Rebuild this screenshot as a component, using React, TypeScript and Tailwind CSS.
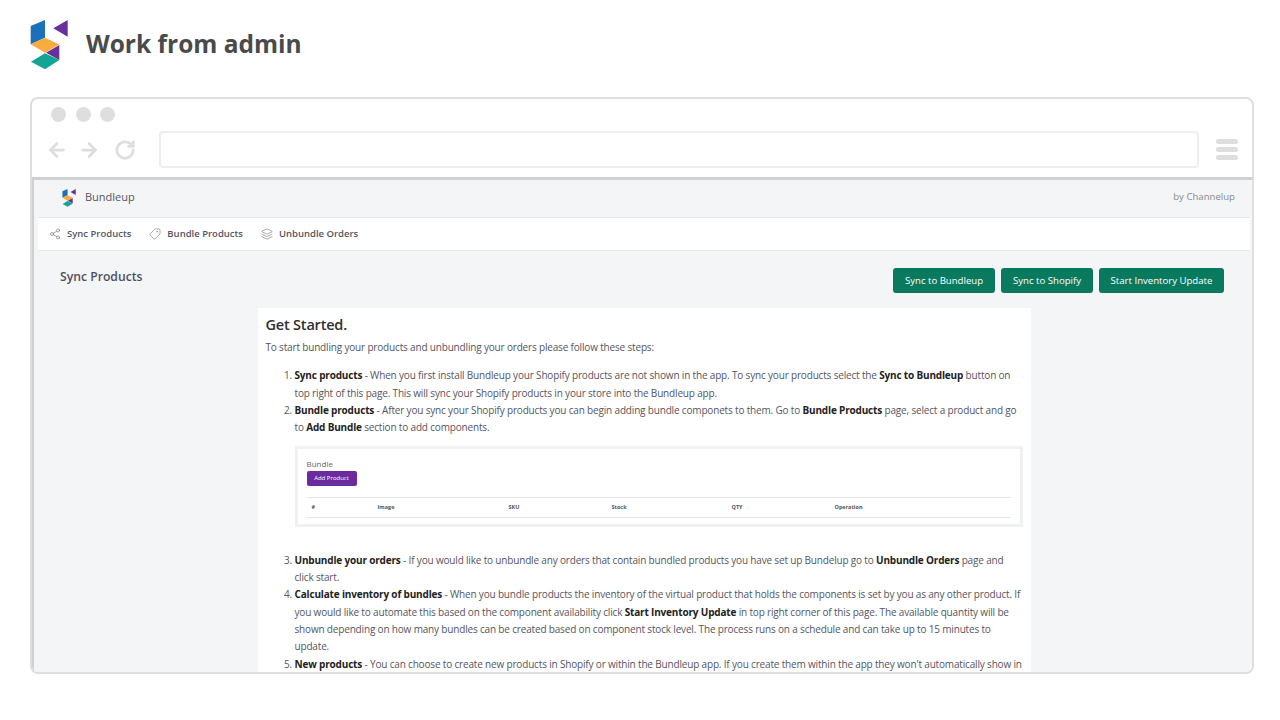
import React from "react";
import { ArrowLeft, ArrowRight, RotateCw, Share2, Tag, Layers } from "lucide-react";

function Logo({ className }: { className: string }) {
  return (
    <svg viewBox="0 0 38 50" className={className}>
      <polygon points="0.7,6 15,0 15,17.7 0.7,24.3" fill="#1b6fbb" />
      <polygon points="0.7,24.3 15,17.7 29.3,24.5 15,32.7" fill="#f9ab3c" />
      <polygon points="37.7,0 23.3,8.3 37.7,16.7" fill="#67309b" />
      <polygon points="29.3,25 29.3,40 16,32.7" fill="#67309b" />
      <polygon points="1,41.7 15,33.3 29.3,40 15,49.3" fill="#12a594" />
    </svg>
  );
}

const navItems = [
  { label: "Sync Products", icon: Share2, iconClass: "w-[12px] h-[12px] text-[#777777]" },
  { label: "Bundle Products", icon: Tag, iconClass: "w-[12px] h-[12px] text-[#777777] -scale-x-100" },
  { label: "Unbundle Orders", icon: Layers, iconClass: "w-[12px] h-[12px] text-[#777777]" },
];

const columns = [
  { label: "#", width: "w-[66px]" },
  { label: "Image", width: "w-[131px]" },
  { label: "SKU", width: "w-[103px]" },
  { label: "Stock", width: "w-[120px]" },
  { label: "QTY", width: "w-[103px]" },
  { label: "Operation", width: "w-[100px]" },
];

export default function App() {
  return (
    <div className="w-[1280px] h-[720px] overflow-hidden bg-white font-['Open_Sans','Noto_Sans',sans-serif]">
      {/* Title */}
      <div className="h-[97px] pl-[30px] pt-5 flex items-start">
        <Logo className="w-[38px] h-[50px]" />
        <h1 className="ml-[18px] mt-[5px] text-[24.5px] leading-[38px] font-bold text-[#4a4a4a]">Work from admin</h1>
      </div>

      {/* Browser frame */}
      <div className="ml-[30px] w-[1224px] h-[577px] border-2 border-[#dedede] rounded-lg flex flex-col overflow-hidden">
        <div className="h-[78px] shrink-0 pl-[19px] pt-2">
          <div className="flex gap-[9.5px]">
            <div className="w-[15px] h-[15px] rounded-full bg-[#dedede]" />
            <div className="w-[15px] h-[15px] rounded-full bg-[#dedede]" />
            <div className="w-[15px] h-[15px] rounded-full bg-[#dedede]" />
          </div>
          <div className="mt-[9px] flex items-center">
            <ArrowLeft className="w-[22px] h-[22px] -ml-[5px] text-[#dedede]" strokeWidth={3} />
            <ArrowRight className="w-[22px] h-[22px] ml-[10px] text-[#dedede]" strokeWidth={3} />
            <RotateCw className="w-[22px] h-[22px] ml-[14px] text-[#dedede]" strokeWidth={3} />
            <div className="ml-[23px] w-[1040px] h-[37px] border-2 border-[#eeeeee] rounded" />
            <div className="ml-[17px] flex flex-col gap-[3px]">
              <div className="w-[22px] h-[5px] rounded-sm bg-[#dedede]" />
              <div className="w-[22px] h-[5px] rounded-sm bg-[#dedede]" />
              <div className="w-[22px] h-[5px] rounded-sm bg-[#dedede]" />
            </div>
          </div>
        </div>

        {/* App inside the browser */}
        <div className="flex-1 min-h-0 border-t-[3px] border-l-[2px] border-[#d0d0d0] bg-[#f4f5f7] pl-[4px] pr-[2px] overflow-hidden">
          <div className="h-[38px] pb-[2px] flex items-center justify-between pl-[24px] pr-[15px] border-b border-[#e6e6e6]">
            <div className="flex items-center gap-[9px]">
              <Logo className="w-[14px] h-[18px]" />
              <span className="text-[11px] text-[#55555f]">Bundleup</span>
            </div>
            <span className="text-[9.6px] text-[#8a8a8a]">by Channelup</span>
          </div>

          <div className="h-[33px] bg-white border-b border-[#e6e6e6] flex items-center pl-[11px] gap-[18px]">
            {navItems.map((item) => {
              const Icon = item.icon;
              return (
                <div key={item.label} className="flex items-center gap-[6px]">
                  <Icon className={item.iconClass} strokeWidth={1.25} />
                  <span className="text-[9.5px] font-semibold text-[#55555f]">{item.label}</span>
                </div>
              );
            })}
          </div>

          <div className="flex items-start justify-between pl-[22px] pr-[26px] pt-[17px]">
            <h2 className="text-[12.2px] leading-[17px] font-semibold text-[#4f4f60]">Sync Products</h2>
            <div className="flex gap-[6px]">
              <button className="h-[25px] w-[102px] pt-px rounded-[3px] bg-[#0a7a5f] text-[9.6px] text-white">Sync to Bundleup</button>
              <button className="h-[25px] w-[92px] pt-px rounded-[3px] bg-[#0a7a5f] text-[9.6px] text-white">Sync to Shopify</button>
              <button className="h-[25px] w-[125px] pt-px rounded-[3px] bg-[#0a7a5f] text-[9.6px] text-white">Start Inventory Update</button>
            </div>
          </div>

          <div className="mx-auto mt-[15px] w-[773px] bg-white px-2 pt-2 text-[10px] tracking-[-0.17px] leading-[17.35px] text-[#55555f]">
            <h3 className="-mt-px text-[14.5px] tracking-[-0.2px] leading-[20px] font-semibold text-[#2f2f2f]">Get Started.</h3>
            <p className="mt-[4px]">To start bundling your products and unbundling your orders please follow these steps:</p>
            <ol className="mt-[11px] list-decimal pl-[29px]">
              <li>
                <b className="text-[#222222]">Sync products</b> - When you first install Bundleup your Shopify products are not shown in the app. To sync your products select the <b className="text-[#222222]">Sync to Bundleup</b> button on<br />
                top right of this page. This will sync your Shopify products in your store into the Bundleup app.
              </li>
              <li>
                <b className="text-[#222222]">Bundle products</b> - After you sync your Shopify products you can begin adding bundle componets to them. Go to <b className="text-[#222222]">Bundle Products</b> page, select a product and go<br />
                to <b className="text-[#222222]">Add Bundle</b> section to add components.
                <div className="mt-[9px] mb-[25px] h-[81px] w-[728px] border-[3px] border-[#f0f1f3] bg-white px-[9px] pt-[9px] tracking-normal">
                  <div className="text-[8px] leading-[12px] text-[#666666]">Bundle</div>
                  <div className="mt-px w-[50px] h-[15px] rounded-[2px] bg-[#6b2a9e] text-[6px] leading-[15px] text-center text-white">Add Product</div>
                  <div className="mt-[11px] h-[21px] border-y border-[#e4e5ea] flex items-center pl-[5px] text-[5.5px] font-bold text-[#555555]">
                    {columns.map((col) => (
                      <div key={col.label} className={col.width}>{col.label}</div>
                    ))}
                  </div>
                </div>
              </li>
              <li>
                <b className="text-[#222222]">Unbundle your orders</b> - If you would like to unbundle any orders that contain bundled products you have set up Bundelup go to <b className="text-[#222222]">Unbundle Orders</b> page and<br />
                click start.
              </li>
              <li>
                <b className="text-[#222222]">Calculate inventory of bundles</b> - When you bundle products the inventory of the virtual product that holds the components is set by you as any other product. If<br />
                you would like to automate this based on the component availability click <b className="text-[#222222]">Start Inventory Update</b> in top right corner of this page. The available quantity will be<br />
                shown depending on how many bundles can be created based on component stock level. The process runs on a schedule and can take up to 15 minutes to<br />
                update.
              </li>
              <li>
                <b className="text-[#222222]">New products</b> - You can choose to create new products in Shopify or within the Bundleup app. If you create them within the app they won't automatically show in
              </li>
            </ol>
          </div>
        </div>
      </div>
    </div>
  );
}
